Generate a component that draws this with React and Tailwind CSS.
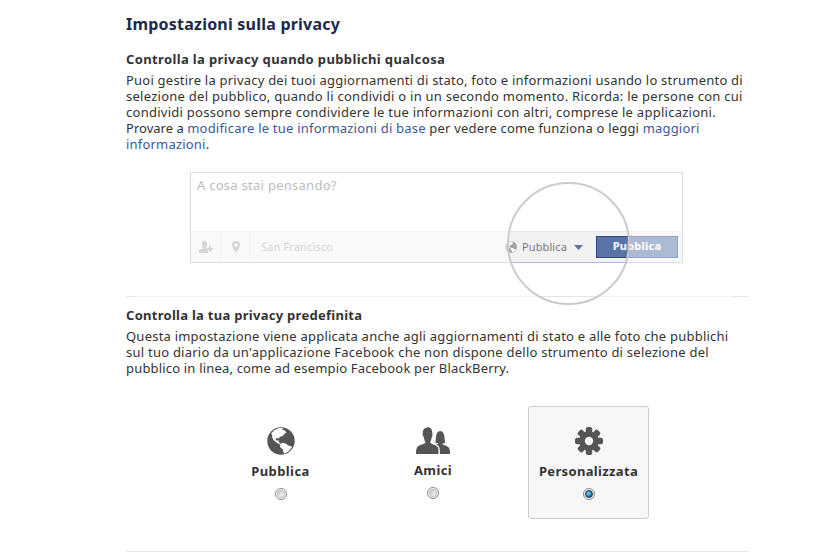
import React, { useState } from "react";

function Line({ children, className = "" }) {
  return <span className={"block whitespace-nowrap " + className}>{children}</span>;
}

function Globe({ className }) {
  return (
    <svg viewBox="0 0 28 28" className={className}>
      <circle cx="14" cy="14" r="13.700" fill="#555" />
      <path
        d="M4 6.500L7.500 3L12 1L16.500 1.200L15 2.800L17.500 3.200L19.500 5.500L17 7L16 9L13.500 9.500L11.500 11.500L9.500 11L8.500 12.500L9.500 13.800L11.500 13L11.800 15L13.500 16.500L12.500 17.200L9 15.200L6.500 13L5 10L5.300 8Z"
        fill="#fff"
      />
      <path
        d="M13.500 16.500L16.500 15.800L19.500 17L21 18.500L24.500 19.200L24.800 20.800L22.500 23.500L20 25.300L17.500 26.800L16.200 25L16 22.500L13.200 20.200L12.800 18Z"
        fill="#fff"
      />
    </svg>
  );
}

function Friends() {
  return (
    <svg viewBox="0 0 34 27" className="w-[34px] h-[27px]" fill="#555">
      <path d="M6.800 7C6.500 2.500 8.500 .8 11 .5C14 -.2 16.500 2 16.300 7C16.900 8 16.500 9.500 15.800 10C15.500 12.500 14.500 14 14.300 15.500C15 17.500 21 18 22 20.500C22.700 22.500 22.500 25 22.500 27H0C0 25 0 22.500 1 20.500C2 18 8.500 17.500 9.300 15.500C9 14 8 12.500 7.800 10C7 9.500 6.300 8 6.800 7Z" />
      <path d="M19.300 15.500C20.300 13 19 4 24.200 4S28.200 13 29.300 15.500C28.800 16.300 27.300 16.500 26.300 16.500C26.500 18.500 32 18.500 33 21C34 23 34 25 34 27H24C24 24 24 21 22.500 19C21.800 18 21 17.500 20 17.200C21.500 17 22.300 16.800 22.300 16.200C21.500 16.500 20.300 16.200 19.300 15.500Z" />
    </svg>
  );
}

function Gear() {
  return (
    <svg viewBox="-14 -14 28 28" className="w-[28px] h-[28px]" fill="#555">
      {[0, 45, 90, 135].map((a) => (
        <rect key={a} x="-3.200" y="-14" width="6.400" height="28" rx="2" transform={`rotate(${a})`} />
      ))}
      <circle r="9.800" />
      <circle r="4.200" fill="#f7f7f7" />
    </svg>
  );
}

function Radio({ checked }) {
  return (
    <span className="flex size-3 items-center justify-center rounded-full border border-[#8c8c8c] bg-[#f4f4f4]">
      {checked ? (
        <span className="size-2 rounded-full border border-[#173a55] bg-[radial-gradient(circle_at_40%_40%,#9fe4ff,#1b86c0_50%,#123f63)]"></span>
      ) : (
        <span className="size-2 rounded-full border border-[#bbb] bg-linear-to-br from-[#bfc4c8] to-white"></span>
      )}
    </span>
  );
}

function Composer() {
  return (
    <div className="relative ml-[9px] h-[135px] w-[597px] overflow-hidden">
      <div className="ml-[55px] mt-[1px] h-[91px] w-[493px] border border-[#b4bbd6] bg-white">
        <div className="h-[58px] pl-[6px] pt-[4px] text-[13px] leading-4 text-[#777]">
          <Line className="tracking-[0.27px]">A cosa stai pensando?</Line>
        </div>
        <div className="flex h-[31px] border-t border-[#e6e6e6] bg-[#f2f2f2] text-[11px]">
          <span className="flex w-[30px] items-center justify-center border-r border-[#e2e2e2]">
            <svg viewBox="0 0 14 12" className="h-3 w-3.5" fill="#aaa">
              <path d="M3 3C3 1 4 0 5.500 0S8 1 8 3C8 5 7.300 6 7 7C7.200 8 8.500 8 9 8.500V12H0C0 10 0 9 1 8.700C2.500 8 4 8 4 7C3.500 6 3 5 3 3Z" />
              <path d="M10 5h2v2h2v2h-2v2h-2V9H8V7h2z" />
            </svg>
          </span>
          <span className="flex w-[30px] items-center justify-center border-r border-[#e2e2e2]">
            <svg viewBox="0 0 8 12" className="h-3 w-2" fill="#aaa">
              <path
                fillRule="evenodd"
                d="M4 0a4 4 0 0 1 4 4C8 7 5.500 9 4 12C2.500 9 0 7 0 4A4 4 0 0 1 4 0ZM4 2.300a1.700 1.700 0 1 0 0 3.400a1.700 1.700 0 0 0 0-3.400Z"
              />
            </svg>
          </span>
          <span className="w-[254px] shrink-0 pl-[10px] leading-[30px] tracking-[0.15px] text-[#aaa]">San Francisco</span>
          <Globe className="mt-[9px] size-3 shrink-0 opacity-50" />
          <span className="ml-[5px] w-[52px] shrink-0 leading-[30px] tracking-[0.1px] text-[#777]">Pubblica</span>
          <span className="mt-[13px] h-[5px] w-[9px] shrink-0 bg-[#5b74a8] [clip-path:polygon(0_0,100%_0,50%_100%)]"></span>
          <button className="ml-[13px] mt-[4px] h-[22px] w-[82px] shrink-0 border border-[#29447e] bg-[#5b74a8] pb-[3px] text-[11px] font-bold leading-[16px] tracking-[0.25px] text-white">
            Pubblica
          </button>
        </div>
      </div>
      <div className="absolute left-[372px] top-[11px] size-[123px] rounded-full border-2 border-[#cbcbcb] shadow-[0_0_0_600px_rgba(255,255,255,0.5)]"></div>
    </div>
  );
}

const options = [
  { id: "public", label: "Pubblica", icon: <Globe className="size-7" />, box: "mr-[-1px] w-[121px] tracking-[0.4px]" },
  { id: "friends", label: "Amici", icon: <Friends />, box: "mr-[2px] w-[120px] tracking-[0.4px]" },
  { id: "custom", label: "Personalizzata", icon: <Gear />, box: "w-[121px] tracking-[0.35px]" },
];

export default function App() {
  const [selected, setSelected] = useState("custom");

  return (
    <div className="h-[559px] w-[821px] overflow-hidden bg-white pl-[126px] pt-[14px] font-['Noto_Sans',sans-serif] text-[13px] leading-4 text-[#333]">
      <h1 className="text-base font-bold leading-5 tracking-[0.22px] text-[#1c2a47]">Impostazioni sulla privacy</h1>
      <h2 className="mt-[17px] font-bold tracking-[0.37px]">Controlla la privacy quando pubblichi qualcosa</h2>
      <p className="mt-[5px]">
        <Line className="tracking-[0.222px]">
          Puoi gestire la privacy dei tuoi aggiornamenti di stato, foto e informazioni usando lo strumento di
        </Line>
        <Line className="tracking-[0.26px]">
          selezione del pubblico, quando li condividi o in un secondo momento. Ricorda: le persone con cui
        </Line>
        <Line className="tracking-[0.26px]">
          condividi possono sempre condividere le tue informazioni con altri, comprese le applicazioni.
        </Line>
        <Line className="tracking-[0.18px]">
          <span className="tracking-[0.02px]">Provare a </span>
          <a className="tracking-[0.22px] text-[#3b5998]">modificare le tue informazioni di base</a> per vedere come
          funziona o leggi <a className="text-[#3b5998]">maggiori</a>
        </Line>
        <Line className="tracking-[0.2px]">
          <a className="text-[#3b5998]">informazioni</a>.
        </Line>
      </p>
      <div className="mt-[19px] w-[622px] bg-[linear-gradient(#e5e5e5,#e5e5e5)] bg-[length:100%_1px] bg-[position:0_125px] bg-no-repeat">
        <Composer />
      </div>
      <h2 className="mt-[1px] font-bold tracking-[0.28px]">Controlla la tua privacy predefinita</h2>
      <p className="mt-[5px]">
        <Line className="tracking-[0.22px]">
          Questa impostazione viene applicata anche agli aggiornamenti di stato e alle foto che pubblichi
        </Line>
        <Line className="tracking-[0.24px]">
          sul tuo diario da un'applicazione Facebook che non dispone dello strumento di selezione del
        </Line>
        <Line className="tracking-[0.18px]">pubblico in linea, come ad esempio Facebook per BlackBerry.</Line>
      </p>
      <div className="ml-[94px] mt-[30px] flex gap-[33px]">
        {options.map((o) => (
          <button
            key={o.id}
            onClick={() => setSelected(o.id)}
            className={
              "flex h-[113px] shrink-0 flex-col items-center rounded-[3px] border pt-[20px] " +
              o.box +
              (selected === o.id ? " border-[#ccc] bg-[#f7f7f7]" : " border-transparent")
            }
          >
            {o.icon}
            <span className="mb-[9px] mt-[8px] font-bold">{o.label}</span>
            <Radio checked={selected === o.id} />
          </button>
        ))}
      </div>
      <hr className="mt-[32px] w-[622px] border-[#e5e5e5]" />
    </div>
  );
}
